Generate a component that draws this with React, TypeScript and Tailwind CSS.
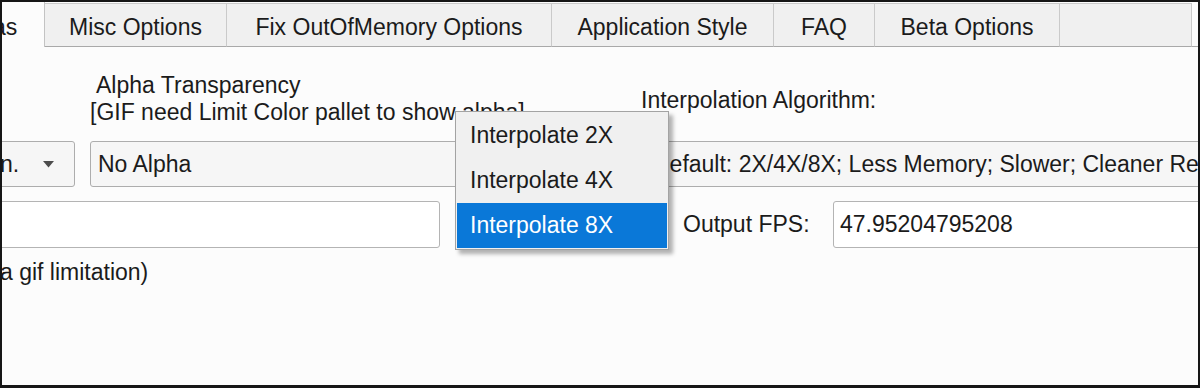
import React from "react";

// Tab strip of the settings window
const tabs = [
  { label: "Misc Options", w: "w-[182px]" },
  { label: "Fix OutOfMemory Options", w: "w-[325px]" },
  { label: "Application Style", w: "w-[222px]" },
  { label: "FAQ", w: "w-[101px]" },
  { label: "Beta Options", w: "w-[185px]" },
];

const menuItems = ["Interpolate 2X", "Interpolate 4X", "Interpolate 8X"];

const Arrow = () => (
  <svg width="11" height="7" viewBox="0 0 11 7" className="shrink-0">
    <path d="M0 0 L11 0 L5.5 6.5 Z" fill="#4d4d4d" />
  </svg>
);

const App: React.FC = () => {
  return (
    <div className="relative w-[1200px] h-[388px] overflow-hidden border-t-2 border-l-2 border-r-2 border-b-[3px] border-[#161616] bg-[#fcfcfc] font-['Liberation_Sans',Arial,sans-serif] text-[23px] text-[#1b1b1b]">
      {/* Tabs */}
      <div className="flex h-[45px]">
        <div className="w-[43px] h-full shrink-0 overflow-hidden border-r border-[#c3c3c3] bg-[#fcfcfc] pt-[12px] leading-[27px]">
          <span className="block -ml-[9px]">as</span>
        </div>
        {tabs.map((t) => (
          <div
            key={t.label}
            className={`${t.w} shrink-0 mt-[1px] h-[44px] flex justify-center pt-[10px] leading-[27px] whitespace-nowrap bg-[#f0f0f0] border-t border-r border-b border-[#cacaca] border-b-[#a9a9a9]`}
          >
            {t.label}
          </div>
        ))}
        <div className="w-[132px] shrink-0 mt-[1px] h-[44px] bg-[#f0f0f0] border-t border-r border-b border-[#cacaca] border-b-[#a9a9a9]" />
        <div className="flex-1 h-[44px] mt-[1px] border-b border-[#a9a9a9]" />
      </div>

      {/* Labels row */}
      <div className="flex mt-[25px] leading-[27px]">
        <div className="w-[639px] shrink-0 pl-[88px] whitespace-nowrap">
          <div className="pl-[6px]">Alpha Transparency</div>
          <div>[GIF need Limit Color pallet to show alpha]</div>
        </div>
        <div className="mt-[15px] whitespace-nowrap">Interpolation Algorithm:</div>
      </div>

      {/* Combo boxes row */}
      <div className="flex mt-[15px] h-[46px]">
        <div className="-ml-[20px] w-[93px] shrink-0 flex items-center justify-between pl-[17px] pr-[20px] rounded-[3px] border border-[#adadad] bg-[#f6f6f6]">
          <span>n.</span>
          <Arrow />
        </div>
        <div className="ml-[15px] w-[546px] shrink-0 flex items-center pl-[7px] rounded-[3px] border border-[#adadad] bg-[#f6f6f6]">
          No Alpha
        </div>
        <div className="ml-[8px] w-[700px] shrink-0 flex items-center pl-[8px] whitespace-nowrap rounded-[3px] border border-[#adadad] bg-[#f6f6f6]">
          Default: 2X/4X/8X; Less Memory; Slower; Cleaner Results
        </div>
      </div>

      {/* Inputs row */}
      <div className="flex items-center mt-[14px] h-[47px]">
        <div className="-ml-[20px] w-[458px] h-full shrink-0 rounded-[3px] border border-[#b4b4b4] bg-white" />
        <div className="ml-[243px] w-[150px] shrink-0 whitespace-nowrap">Output FPS:</div>
        <div className="w-[420px] h-full shrink-0 flex items-center pl-[6px] rounded-[3px] border border-[#b4b4b4] bg-white">
          47.95204795208
        </div>
      </div>

      <div className="mt-[11px] leading-[27px] -ml-[2px] whitespace-nowrap">a gif limitation)</div>

      {/* Open dropdown menu */}
      <div className="absolute left-[453px] top-[109px] w-[214px] p-[1px] border border-[#a3a3a3] bg-[#f0f0f0] shadow-[4px_4px_4px_rgba(0,0,0,0.3)]">
        {menuItems.map((m, i) => (
          <div
            key={m}
            className={`h-[45px] flex items-center pl-[13px] ${
              i === 2 ? "bg-[#0a78d8] text-white" : ""
            }`}
          >
            {m}
          </div>
        ))}
      </div>
    </div>
  );
};

export default App;
